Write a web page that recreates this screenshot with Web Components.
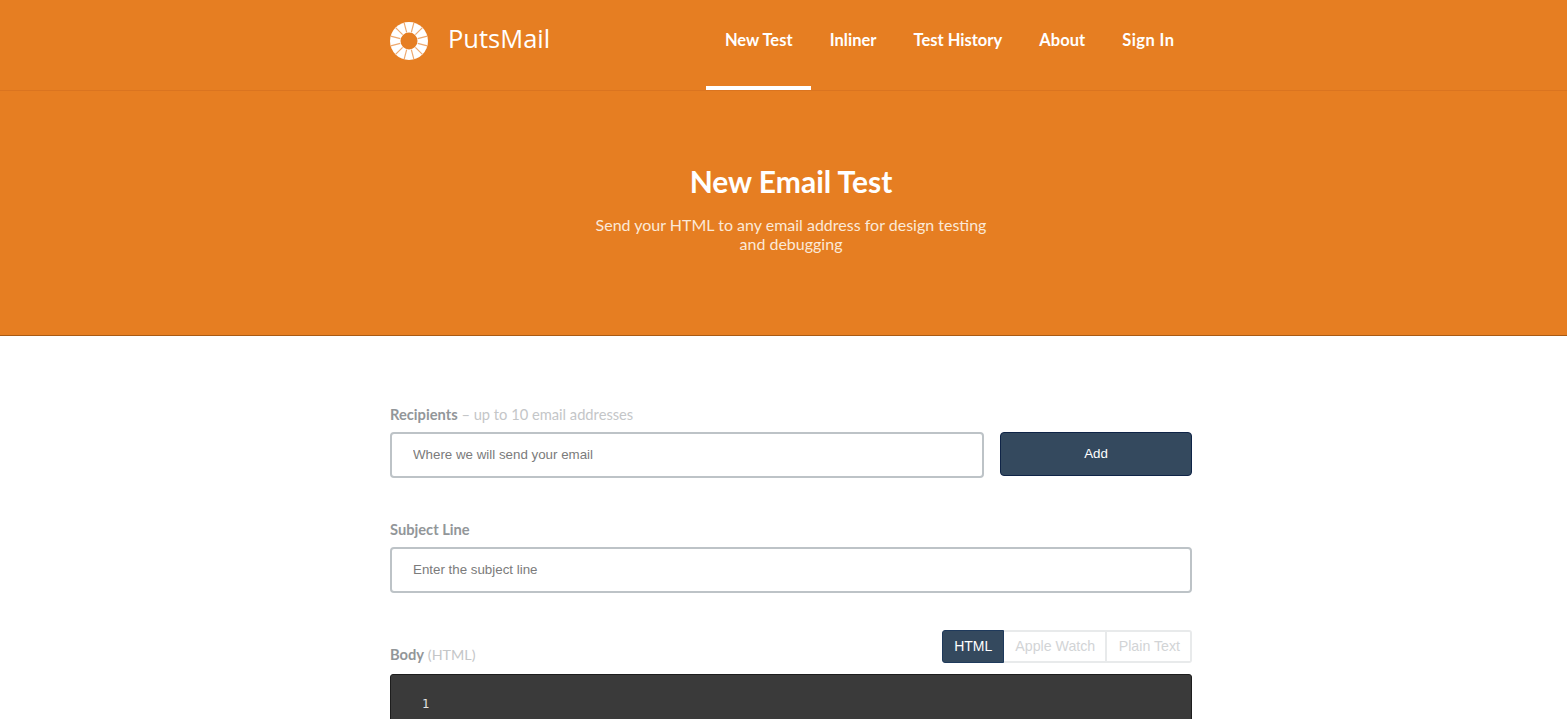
<!DOCTYPE html>
<html lang="en">
<head>
<meta charset="utf-8">
<title>PutsMail</title>
<style>
  html { height: 100%; overflow: hidden; background: #fff; }
  /* the original page is centred on x=791, so it is a little wider than the window */
  body { margin: 0; width: 1582px; font-family: Lato, "Liberation Sans", sans-serif; }
  pm-field b { color: #929699; font-weight: 700; }
  pm-nav-link:last-child { letter-spacing: .4px; }
</style>
</head>
<body>
<pm-header>
  <pm-nav-link active>New Test</pm-nav-link>
  <pm-nav-link>Inliner</pm-nav-link>
  <pm-nav-link>Test History</pm-nav-link>
  <pm-nav-link>About</pm-nav-link>
  <pm-nav-link>Sign In</pm-nav-link>
</pm-header>
<pm-hero heading="New Email Test">Send your HTML to any email address for design testing<br>and debugging</pm-hero>
<pm-form>
  <pm-field class="recipients">
    <span slot="label"><b>Recipients</b> – up to 10 email addresses</span>
    <pm-input placeholder="Where we will send your email"></pm-input>
    <pm-button>Add</pm-button>
  </pm-field>
  <pm-field class="subject" style="margin-bottom: 36px">
    <span slot="label"><b>Subject Line</b></span>
    <pm-input placeholder="Enter the subject line"></pm-input>
  </pm-field>
  <pm-body-editor></pm-body-editor>
</pm-form>

<script>
class PmHeader extends HTMLElement {
  constructor() {
    super();
    this.attachShadow({ mode: "open" });
    // logo spokes are generated so they stay evenly spaced
    let spokes = "";
    for (let i = 0; i < 12; i++) {
      spokes += `<line x1="19" y1="10" x2="19" y2="0" transform="rotate(${15 + i * 30} 19 19)"/>`;
    }
    this.shadowRoot.innerHTML = `
      <style>
        :host { display: block; height: 90px; border-bottom: 1px solid #da7420; background: #e67e22; }
        .inner { width: 802px; height: 90px; margin: 0 auto; display: flex; justify-content: space-between; }
        .brand { display: flex; align-items: center; gap: 20px; height: 82px; color: #fff; font: 400 25.5px/1 "Open Sans", sans-serif; }
        .brand span { margin-bottom: 5px; }
        svg { display: block; }
        nav { display: flex; margin-right: -1px; }
      </style>
      <div class="inner">
        <div class="brand">
          <svg width="38" height="38" viewBox="0 0 38 38">
            <circle cx="19" cy="19" r="19" fill="#fff"/>
            <g stroke="#eea96f" stroke-width="1.2">${spokes}</g>
            <circle cx="19" cy="19" r="8.5" fill="#e67e22"/>
          </svg>
          <span>PutsMail</span>
        </div>
        <nav><slot></slot></nav>
      </div>`;
  }
}

class PmNavLink extends HTMLElement {
  constructor() {
    super();
    this.attachShadow({ mode: "open" });
    this.shadowRoot.innerHTML = `
      <style>
        :host { display: block; box-sizing: border-box; height: 90px; padding: 30px 18.6px 0; color: #fff; font: 700 16.5px/20px Lato, sans-serif; border-bottom: 4px solid transparent; }
        :host([active]) { border-bottom-color: #fff; }
      </style>
      <slot></slot>`;
  }
}

class PmHero extends HTMLElement {
  constructor() {
    super();
    this.attachShadow({ mode: "open" });
    this.shadowRoot.innerHTML = `
      <style>
        :host { display: block; box-sizing: border-box; height: 245px; padding-top: 72px; background: #e67e22; border-bottom: 1px solid #a85a14; text-align: center; color: #fff; }
        h1 { margin: 0 0 16px; font: 700 30px/36px Lato, sans-serif; }
        p { margin: 0; font: 400 16px/19px Lato, sans-serif; color: #fbe9d8; }
      </style>
      <h1></h1>
      <p><slot></slot></p>`;
  }
  connectedCallback() {
    this.shadowRoot.querySelector("h1").textContent = this.getAttribute("heading");
  }
}

class PmForm extends HTMLElement {
  constructor() {
    super();
    this.attachShadow({ mode: "open" });
    this.shadowRoot.innerHTML = `
      <style>
        :host { display: flex; flex-direction: column; box-sizing: border-box; width: 802px; margin: 0 auto; padding-top: 70px; }
      </style>
      <slot></slot>`;
  }
}

class PmField extends HTMLElement {
  constructor() {
    super();
    this.attachShadow({ mode: "open" });
    this.shadowRoot.innerHTML = `
      <style>
        :host { display: block; margin-bottom: 43px; }
        .label { height: 18px; margin-bottom: 8px; font: 400 14.7px/17px Lato, sans-serif; }
        ::slotted(span) { color: #c4c6c8; }
        .row { display: flex; gap: 16px; }
      </style>
      <div class="label"><slot name="label"></slot></div>
      <div class="row"><slot></slot></div>`;
  }
}

class PmInput extends HTMLElement {
  constructor() {
    super();
    this.attachShadow({ mode: "open" });
    this.shadowRoot.innerHTML = `
      <style>
        :host { display: block; flex: 1; }
        input { display: block; box-sizing: border-box; width: 100%; height: 46px; padding: 0 21px 1px; border: 2px solid #bdc3c7; border-radius: 4px; background: #fff; font: 400 13.33px "Liberation Sans", sans-serif; outline: none; }
        input::placeholder { color: #7b7b7b; opacity: 1; }
      </style>
      <input type="text">`;
  }
  connectedCallback() {
    this.shadowRoot.querySelector("input").placeholder = this.getAttribute("placeholder");
  }
}

class PmButton extends HTMLElement {
  constructor() {
    super();
    this.attachShadow({ mode: "open" });
    this.shadowRoot.innerHTML = `
      <style>
        :host { display: flex; align-items: center; justify-content: center; box-sizing: border-box; width: 192px; height: 44px; padding-bottom: 1px; background: #34495e; border: 1px solid #0f2447; border-radius: 4px; color: #fff; font: 400 13.33px "Liberation Sans", sans-serif; }
      </style>
      <slot></slot>`;
  }
}

class PmBodyEditor extends HTMLElement {
  constructor() {
    super();
    this.attachShadow({ mode: "open" });
    this.shadowRoot.innerHTML = `
      <style>
        :host { display: block; }
        .top { display: flex; justify-content: space-between; align-items: flex-end; height: 34px; margin-bottom: 11px; }
        .label { margin-bottom: -1px; color: #c4c6c8; font: 400 14.7px/18px Lato, sans-serif; }
        .label b { color: #929699; font-weight: 700; }
        .label span { font-size: 14.3px; }
        .tabs { display: flex; height: 33px; box-sizing: border-box; font: 400 14.2px/29px "Liberation Sans", sans-serif; color: #d2d4d6; }
        .tabs span { box-sizing: border-box; border: 2px solid #e8eaeb; border-left-width: 0; padding: 0 10px 0 11px; }
        .tabs span:first-child { background: #34495e; color: #fff; border: 1px solid #1f3a5c; border-radius: 3px 0 0 3px; padding: 0 11px; font-size: 14px; line-height: 31px; }
        .tabs span:last-child { border-radius: 0 3px 3px 0; padding-left: 11.5px; }
        .code { box-sizing: border-box; height: 120px; background: #3a3a3a; border: 1px solid #1d1d1d; border-radius: 3px; padding: 21px 0 0 31px; color: #e4e4e4; font: 400 12px/16px "DejaVu Sans Mono", monospace; }
      </style>
      <div class="top">
        <div class="label"><b>Body</b> <span>(HTML)</span></div>
        <div class="tabs"><span>HTML</span><span>Apple Watch</span><span>Plain Text</span></div>
      </div>
      <div class="code">1</div>`;
  }
}

customElements.define("pm-header", PmHeader);
customElements.define("pm-nav-link", PmNavLink);
customElements.define("pm-hero", PmHero);
customElements.define("pm-form", PmForm);
customElements.define("pm-field", PmField);
customElements.define("pm-input", PmInput);
customElements.define("pm-button", PmButton);
customElements.define("pm-body-editor", PmBodyEditor);
</script>
</body>
</html>
